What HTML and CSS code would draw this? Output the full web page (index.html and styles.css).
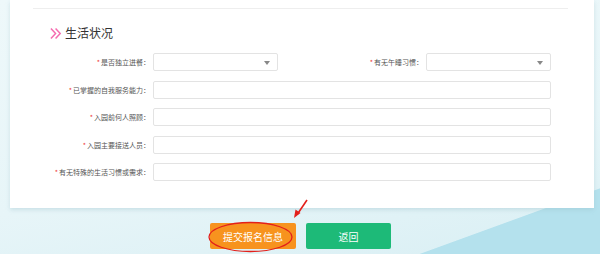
FILE: index.html
```html
<!DOCTYPE html>
<html lang="zh-CN">
<head>
  <meta charset="UTF-8">
  <title>生活状况</title>
  <link rel="stylesheet" href="styles.css">
</head>
<body>
<div class="page">
  <div class="card">
    <div class="section">
      <h2 class="section-title">
        <svg class="title-icon" viewBox="0 0 14 14" xmlns="http://www.w3.org/2000/svg">
          <path d="M1 1.5 L6 7 L1 12.5 M6 1.5 L11 7 L6 12.5" fill="none" stroke="#f56cb0" stroke-width="1.6"/>
        </svg>
        生活状况
      </h2>

      <div class="form">
        <div class="row">
          <label class="label">是否独立进餐：</label>
          <div class="select"><span class="caret"></span></div>
          <label class="label label-mid">有无午睡习惯：</label>
          <div class="select"><span class="caret"></span></div>
        </div>
        <div class="row">
          <label class="label">已掌握的自我服务能力：</label>
          <input class="input" type="text">
        </div>
        <div class="row">
          <label class="label">入园前何人照顾：</label>
          <input class="input" type="text">
        </div>
        <div class="row">
          <label class="label">入园主要接送人员：</label>
          <input class="input" type="text">
        </div>
        <div class="row">
          <label class="label">有无特殊的生活习惯或需求：</label>
          <input class="input" type="text">
        </div>
      </div>
    </div>
  </div>

  <div class="actions">
    <button class="btn btn-submit" type="button">提交报名信息</button>
    <button class="btn btn-back" type="button">返回</button>
  </div>
</div>

<!-- annotation drawn over the screenshot -->
<svg class="mark" viewBox="0 0 600 254" xmlns="http://www.w3.org/2000/svg">
  <ellipse cx="250.5" cy="237" rx="41.5" ry="14.5" fill="none" stroke="#e3201b" stroke-width="1.3"/>
  <path d="M307 200 L297.5 214" stroke="#e3201b" stroke-width="1.6" fill="none"/>
  <path d="M294 218 L295.5 209.5 L300.5 213 Z" fill="#e3201b"/>
</svg>
</body>
</html>
```

FILE: styles.css
```css
* {
  margin: 0;
  padding: 0;
  box-sizing: border-box;
}

body {
  width: 600px;
  height: 254px;
  overflow: hidden;
  position: relative;
  font-family: "Noto Sans CJK SC", "Liberation Sans", sans-serif;
  background:
    linear-gradient(160deg, transparent 0, transparent 86%, #b4e1ed 86.2%),
    linear-gradient(170deg, #eef8fa 0, #e7f5f8 60%, #d9eff4 100%);
}

.page {
  padding: 0 6px 0 10px;
}

.card {
  background: #fff;
  height: 208px;
  box-shadow: 0 2px 4px rgba(150, 190, 200, 0.35);
  padding: 8px 26px 0 23px;
}

.section {
  border-top: 1px solid #eeeeee;
}

.section-title {
  display: flex;
  align-items: center;
  gap: 2px;
  margin: 15px 0 0 17px;
  font-size: 12px;
  font-weight: 400;
  color: #333;
  line-height: 18px;
}

.title-icon {
  width: 13px;
  height: 13px;
}

.form {
  display: flex;
  flex-direction: column;
  gap: 9.5px;
  margin-top: 11px;
}

.row {
  display: flex;
  align-items: center;
  gap: 3px;
  height: 18px;
}

.label {
  width: 117px;
  text-align: right;
  font-size: 7px;
  color: #555;
  white-space: nowrap;
}

.label::before {
  content: "*";
  color: #e33;
  margin-right: 1px;
}

.label-mid {
  width: 142px;
}

.select,
.input {
  height: 18px;
  border: 1px solid #e3e3e3;
  border-radius: 2px;
  background: #fff;
}

.select {
  width: 125px;
  position: relative;
}

.caret {
  position: absolute;
  right: 7px;
  top: 7px;
  border-left: 3px solid transparent;
  border-right: 3px solid transparent;
  border-top: 4px solid #888;
}

.input {
  width: 398px;
  outline: none;
}

.actions {
  display: flex;
  justify-content: center;
  gap: 10px;
  margin-top: 15px;
  padding-right: 3px;
}

.btn {
  height: 26px;
  border: none;
  border-radius: 2px;
  color: #fff;
  font-family: "Noto Sans CJK SC", sans-serif;
  font-size: 10px;
}

.btn-submit {
  width: 86px;
  background: #f7931e;
}

.btn-back {
  width: 85px;
  background: #1dba78;
}

.mark {
  position: absolute;
  left: 0;
  top: 0;
  width: 600px;
  height: 254px;
  pointer-events: none;
}
```
